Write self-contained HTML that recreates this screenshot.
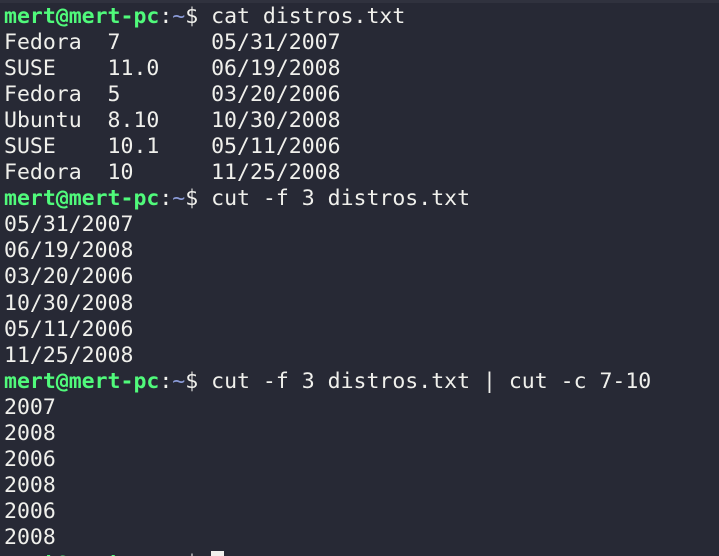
<!DOCTYPE html>
<html><head><style>
html,body{margin:0;padding:0;width:719px;height:556px;overflow:hidden;background:#272935;}
.w{position:relative;width:719px;height:556px;overflow:hidden;}
.t{position:absolute;left:4px;top:4px;font-family:"DejaVu Sans Mono","Liberation Mono",monospace;font-size:21.5px;line-height:26.05px;color:#f0f0ec;white-space:pre;}
.g{color:#50fa7b;font-weight:bold}
.b{color:#8b9bd8}
.c{background:#f0f0ec;color:#272935}
.top{position:absolute;left:0;top:0;width:719px;height:3px;background:#30323e}
</style></head><body><div class="w">
<div class="top"></div>
<div class="t"><span class="g">mert@mert-pc</span>:<span class="b">~</span>$ cat distros.txt
Fedora  7       05/31/2007
SUSE    11.0    06/19/2008
Fedora  5       03/20/2006
Ubuntu  8.10    10/30/2008
SUSE    10.1    05/11/2006
Fedora  10      11/25/2008
<span class="g">mert@mert-pc</span>:<span class="b">~</span>$ cut -f 3 distros.txt
05/31/2007
06/19/2008
03/20/2006
10/30/2008
05/11/2006
11/25/2008
<span class="g">mert@mert-pc</span>:<span class="b">~</span>$ cut -f 3 distros.txt | cut -c 7-10
2007
2008
2006
2008
2006
2008
<span class="g">mert@mert-pc</span>:<span class="b">~</span>$ <span class="c"> </span></div>
</div></body></html>
